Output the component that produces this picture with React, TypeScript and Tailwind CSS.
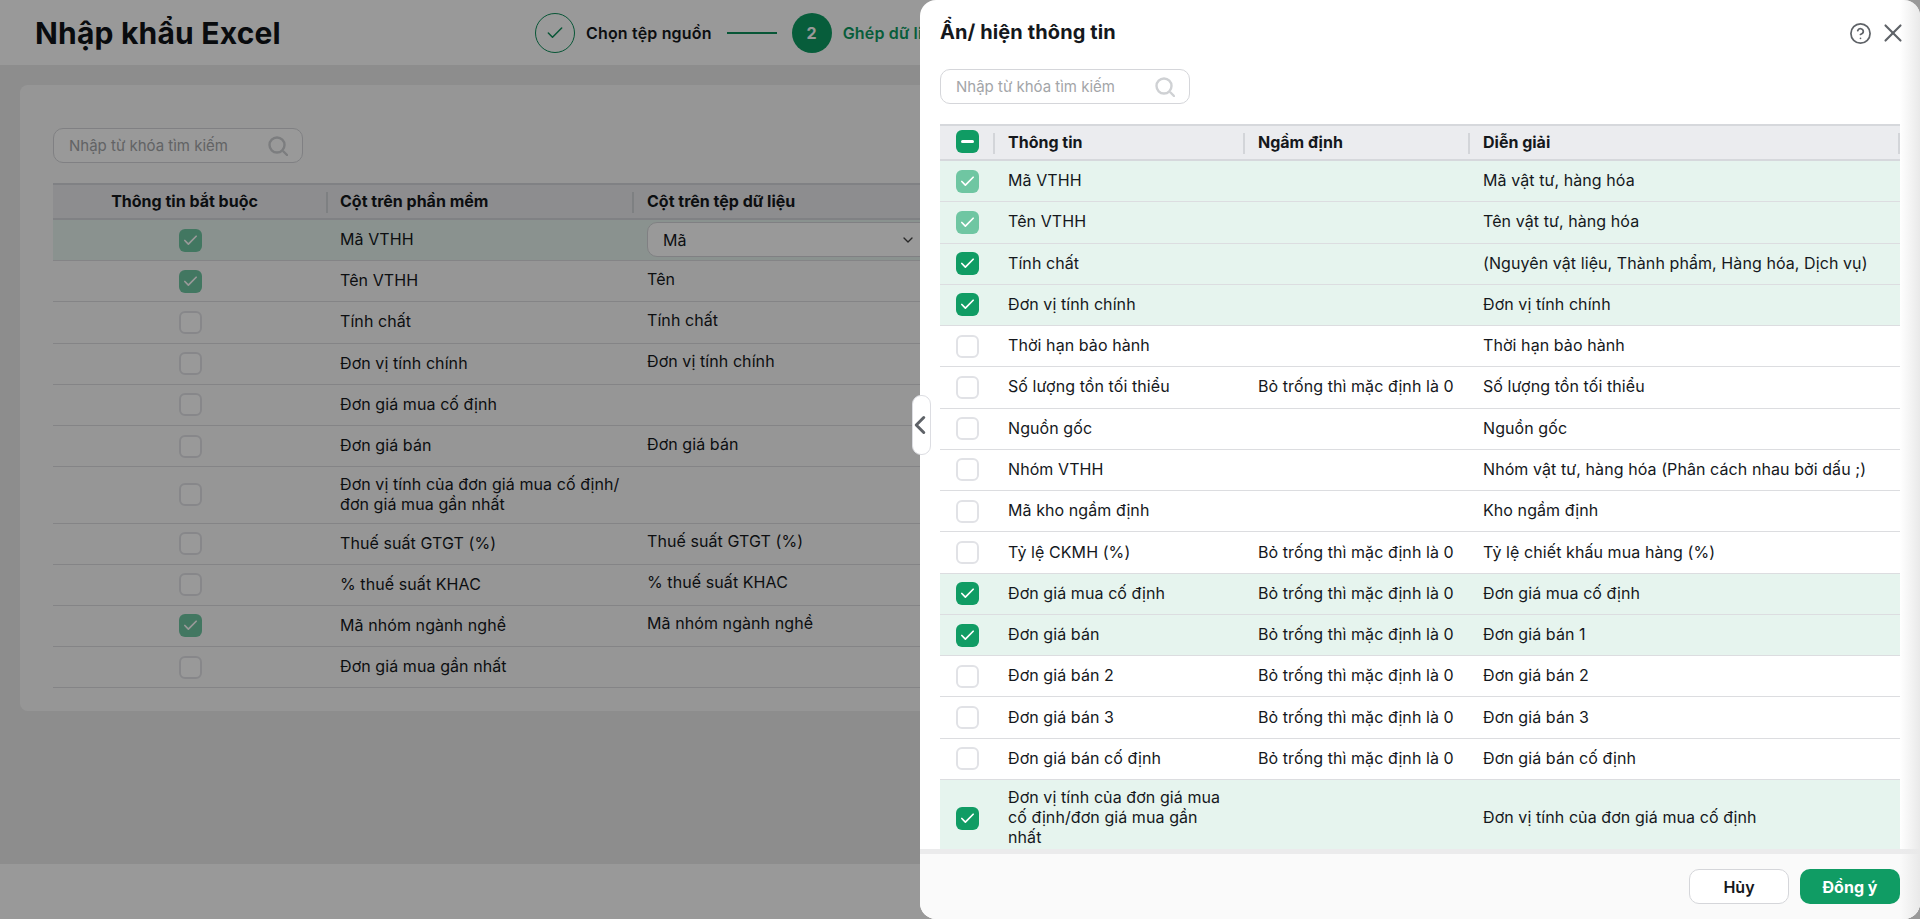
import React from "react";
import { Check, ChevronDown, ChevronLeft, CircleHelp, X } from "lucide-react";

type BoxState = "off" | "on" | "locked";

const EMPTY_HINT = "Bỏ trống thì mặc định là 0";

const fields: { name: string; hint?: string; desc: string; state: BoxState; tall?: boolean }[] = [
  { name: "Mã VTHH", desc: "Mã vật tư, hàng hóa", state: "locked" },
  { name: "Tên VTHH", desc: "Tên vật tư, hàng hóa", state: "locked" },
  { name: "Tính chất", desc: "(Nguyên vật liệu, Thành phẩm, Hàng hóa, Dịch vụ)", state: "on" },
  { name: "Đơn vị tính chính", desc: "Đơn vị tính chính", state: "on" },
  { name: "Thời hạn bảo hành", desc: "Thời hạn bảo hành", state: "off" },
  { name: "Số lượng tồn tối thiểu", hint: EMPTY_HINT, desc: "Số lượng tồn tối thiểu", state: "off" },
  { name: "Nguồn gốc", desc: "Nguồn gốc", state: "off" },
  { name: "Nhóm VTHH", desc: "Nhóm vật tư, hàng hóa (Phân cách nhau bởi dấu ;)", state: "off" },
  { name: "Mã kho ngầm định", desc: "Kho ngầm định", state: "off" },
  { name: "Tỷ lệ CKMH (%)", hint: EMPTY_HINT, desc: "Tỷ lệ chiết khấu mua hàng (%)", state: "off" },
  { name: "Đơn giá mua cố định", hint: EMPTY_HINT, desc: "Đơn giá mua cố định", state: "on" },
  { name: "Đơn giá bán", hint: EMPTY_HINT, desc: "Đơn giá bán 1", state: "on" },
  { name: "Đơn giá bán 2", hint: EMPTY_HINT, desc: "Đơn giá bán 2", state: "off" },
  { name: "Đơn giá bán 3", hint: EMPTY_HINT, desc: "Đơn giá bán 3", state: "off" },
  { name: "Đơn giá bán cố định", hint: EMPTY_HINT, desc: "Đơn giá bán cố định", state: "off" },
  {
    name: "Đơn vị tính của đơn giá mua cố định/đơn giá mua gần nhất",
    desc: "Đơn vị tính của đơn giá mua cố định",
    state: "on",
    tall: true,
  },
];

const mapping: { name: string; source?: string; state: BoxState; tall?: boolean; select?: boolean }[] = [
  { name: "Mã VTHH", source: "Mã", state: "locked", select: true },
  { name: "Tên VTHH", source: "Tên", state: "locked" },
  { name: "Tính chất", source: "Tính chất", state: "off" },
  { name: "Đơn vị tính chính", source: "Đơn vị tính chính", state: "off" },
  { name: "Đơn giá mua cố định", state: "off" },
  { name: "Đơn giá bán", source: "Đơn giá bán", state: "off" },
  { name: "Đơn vị tính của đơn giá mua cố định/ đơn giá mua gần nhất", state: "off", tall: true },
  { name: "Thuế suất GTGT (%)", source: "Thuế suất GTGT (%)", state: "off" },
  { name: "% thuế suất KHAC", source: "% thuế suất KHAC", state: "off" },
  { name: "Mã nhóm ngành nghề", source: "Mã nhóm ngành nghề", state: "locked" },
  { name: "Đơn giá mua gần nhất", state: "off" },
];

function Box({ state }: { state: BoxState }) {
  if (state === "off") {
    return <span className="block size-[23px] rounded-[6px] border-2 border-[#e1e2e6] bg-white" />;
  }
  return (
    <span
      className={`flex size-[23px] items-center justify-center rounded-[6px] text-white ${
        state === "on" ? "bg-[#109c64]" : "bg-[#6fc6a2]"
      }`}
    >
      <Check size={17} strokeWidth={2.4} />
    </span>
  );
}

function SearchBox() {
  return (
    <div className="flex h-[35px] w-[250px] items-center justify-between rounded-[10px] border border-[#d5d6da] bg-white pl-[15px] pr-[14px]">
      <span className="pt-[2px] text-[15px] text-[#a3a5a8]">Nhập từ khóa tìm kiếm</span>
      <svg width="20" height="20" viewBox="0 0 20 20" fill="none" className="shrink-0">
        <circle cx="9" cy="9" r="7.5" stroke="#cfd1d4" strokeWidth="2.4" />
        <path d="M15.5 15.5 19 19" stroke="#cfd1d4" strokeWidth="2.4" strokeLinecap="round" />
      </svg>
    </div>
  );
}

function HeadCell({ className, children }: { className: string; children?: React.ReactNode }) {
  return (
    <div className={`relative flex h-full items-center pb-[2px] text-[16px] font-bold text-[#15181c] ${className}`}>
      {children}
      <span className="absolute right-0 top-[7px] h-[21px] w-[2px] bg-[#d3d5d9]" />
    </div>
  );
}

function ImportPage() {
  return (
    <div className="flex h-full flex-col bg-[#ebebeb]">
      <header className="flex h-[65px] items-center bg-white pl-[35px]">
        <h1 className="w-[500px] pt-[2px] text-[30px] font-bold tracking-[0.2px] text-[#101318]">Nhập khẩu Excel</h1>
        <div className="flex items-center">
          <span className="flex size-[40px] items-center justify-center rounded-full border border-[#0d8f5b] text-[#0d8f5b]">
            <Check size={20} strokeWidth={1.8} />
          </span>
          <span className="ml-[11px] text-[16px] font-semibold tracking-[0.17px] text-[#15181c]">Chọn tệp nguồn</span>
          <span className="ml-[15px] h-[2px] w-[50px] bg-[#0d8f5b]" />
          <span className="ml-[15px] flex size-[40px] items-center justify-center rounded-full bg-[#0d9c63] text-[16px] font-bold text-white">
            2
          </span>
          <span className="ml-[11px] whitespace-nowrap text-[16px] font-semibold tracking-[0.17px] text-[#0d9c63]">
            Ghép dữ liệu
          </span>
        </div>
      </header>

      <main className="flex-1 px-[20px] pt-[20px]">
        <section className="h-[626px] rounded-[8px] bg-[#fbfbfb] px-[33px] pt-[43px]">
          <SearchBox />
          <div className="mt-[20px]">
            <div className="flex h-[37px] border-y-2 border-[#d6d8dc] bg-[#ebecef]">
              <HeadCell className="w-[275px] justify-center pr-[12px]">Thông tin bắt buộc</HeadCell>
              <HeadCell className="w-[306px] pl-[12px]">Cột trên phần mềm</HeadCell>
              <HeadCell className="flex-1 pl-[13px]">Cột trên tệp dữ liệu</HeadCell>
            </div>
            {mapping.map((row) => (
              <div
                key={row.name}
                className={`flex items-center border-b border-[#dcdde0] text-[16px] tracking-[0.08px] text-[#15181c] ${
                  row.tall ? "h-[56.4px]" : "h-[41.2px]"
                } ${row.select ? "bg-[#e6f4ee]" : ""}`}
              >
                <div className="flex w-[275px] justify-center">
                  <Box state={row.state} />
                </div>
                <div className="w-[306px] pb-[2px] pl-[12px] pr-[10px] leading-[20px]">{row.name}</div>
                <div className="flex-1 pb-[5px] pl-[13px]">
                  {row.select ? (
                    <div className="mt-[4px] flex h-[35px] w-[400px] items-center rounded-[10px] border border-[#d5d6da] bg-white pl-[15px]">
                      {row.source}
                      <ChevronDown size={16} className="ml-auto mr-[130px] text-[#444]" />
                    </div>
                  ) : (
                    row.source
                  )}
                </div>
              </div>
            ))}
          </div>
        </section>
      </main>

      <footer className="h-[55px] bg-white" />
    </div>
  );
}

function FieldPanel() {
  return (
    <aside className="absolute bottom-0 right-0 top-0 flex w-[1000px] flex-col rounded-[16px] bg-white">
      <button className="absolute left-[-8px] top-[395px] z-10 flex h-[60px] w-[19px] items-center justify-center rounded-[9px] border border-[#dcdde2] bg-white pr-[4px] text-[#5f6368]">
        <ChevronLeft size={30} strokeWidth={2.4} className="shrink-0" />
      </button>

      <div className="flex h-[69px] items-start justify-between pl-[20px] pr-[12px] pt-[18px]">
        <h2 className="text-[20px] font-bold leading-[28px] tracking-[0.1px] text-[#15181c]">Ẩn/ hiện thông tin</h2>
        <div className="z-10 flex items-center gap-[6px] text-[#5f6368]">
          <CircleHelp size={23} strokeWidth={1.8} />
          <X size={30} strokeWidth={1.7} />
        </div>
      </div>

      <div className="pl-[20px]">
        <SearchBox />
      </div>

      <div className="mt-[20px] min-h-0 flex-1 overflow-hidden pl-[20px] pr-[20px]">
        <div className="flex h-[37px] border-y-2 border-[#d6d8dc] bg-[#ebecef]">
          <HeadCell className="w-[55px] justify-start pb-0 pl-[16px]">
            <span className="flex size-[23px] items-center justify-center rounded-[6px] bg-[#109c64]">
              <span className="h-[3px] w-[13px] rounded-full bg-white" />
            </span>
          </HeadCell>
          <HeadCell className="w-[250px] pl-[13px]">Thông tin</HeadCell>
          <HeadCell className="w-[225px] pl-[13px]">Ngầm định</HeadCell>
          <HeadCell className="flex-1 pl-[13px]">Diễn giải</HeadCell>
        </div>
        {fields.map((field) => (
          <div
            key={field.name}
            className={`flex items-center border-b border-[#dcdde0] text-[16px] leading-[20px] tracking-[0.08px] text-[#15181c] ${
              field.tall ? "h-[78px]" : "h-[41.27px]"
            } ${field.state === "off" ? "bg-white" : "bg-[#e6f4ee]"}`}
          >
            <div className="w-[55px] pl-[16px]">
              <Box state={field.state} />
            </div>
            <div className={`w-[250px] pb-[2px] pl-[13px] ${field.tall ? "pr-[20px]" : ""}`}>{field.name}</div>
            <div className="w-[225px] whitespace-nowrap pb-[2px] pl-[13px]">{field.hint}</div>
            <div className="flex-1 pb-[2px] pl-[13px]">{field.desc}</div>
          </div>
        ))}
      </div>

      <div className="flex h-[70px] items-start justify-end gap-[11px] rounded-b-[16px] border-t-[5px] border-[#ebebec] bg-[#fafafa] pr-[20px] pt-[15px]">
        <button className="h-[35px] w-[100px] rounded-[10px] border border-[#d5d6da] bg-white text-[16px] font-semibold text-[#15181c]">
          Hủy
        </button>
        <button className="h-[35px] w-[100px] rounded-[10px] bg-[#109c64] text-[16px] font-bold text-white">
          Đồng ý
        </button>
      </div>

      {/* soft shade down the right edge of the panel */}
      <span className="pointer-events-none absolute bottom-0 right-0 top-0 w-[20px] rounded-r-[16px] bg-gradient-to-r from-white/0 to-[#e9e9e9]" />
    </aside>
  );
}

export default function App() {
  return (
    <div className="relative h-[919px] w-full overflow-hidden font-['Inter',sans-serif]">
      <ImportPage />
      <div className="absolute inset-0 bg-black/40" />
      <FieldPanel />
    </div>
  );
}
